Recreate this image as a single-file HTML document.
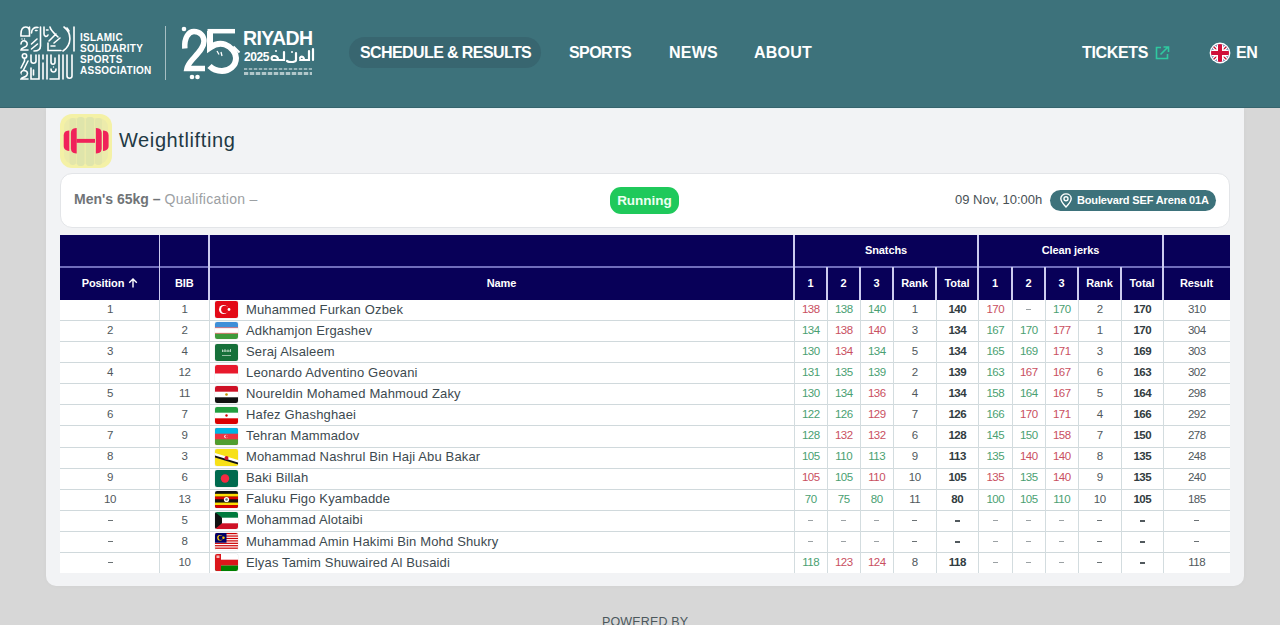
<!DOCTYPE html>
<html><head><meta charset="utf-8"><title>Weightlifting results</title>
<style>
*{box-sizing:border-box;margin:0;padding:0}
html,body{width:1280px;height:625px;overflow:hidden;background:#d7d7d7;font-family:"Liberation Sans",sans-serif}
.abs{position:absolute}
#hdr{position:absolute;left:0;top:0;width:1280px;height:108px;background:#3d727b;border-bottom:1px solid #36646d;z-index:2}
.nav{position:absolute;top:42px;height:22px;line-height:22px;color:#fff;font-weight:bold;font-size:16px;letter-spacing:-0.6px;white-space:nowrap}
.pill{position:absolute;left:349px;top:37px;width:192px;height:31px;border-radius:16px;background:#386670}
.issa{position:absolute;left:80px;top:33px;color:#fff;font-weight:bold;font-size:10px;line-height:10.85px;letter-spacing:0.25px;white-space:nowrap}
#wrap{position:absolute;left:46px;top:108px;width:1198px;height:477.5px;border-top:1px solid #e9f3f6;background:#f2f3f5;border-radius:0 0 10px 10px;box-shadow:0 0 5px rgba(0,0,0,0.03)}
.title{position:absolute;left:119px;top:128px;font-size:20px;line-height:24px;letter-spacing:0.6px;color:#1f3944;white-space:nowrap}
.card{position:absolute;left:60px;top:173px;width:1170px;height:55px;background:#fff;border:1px solid #e3e5e8;border-radius:12px}
.tbl{position:absolute;left:60px;top:235px;width:1170px}
.hc{position:absolute;background:#080058;color:#fff;font-weight:bold;font-size:11px;text-align:center;white-space:nowrap}
.c{position:absolute;height:21px;line-height:21px;text-align:center;font-size:11.5px;color:#50585c;white-space:nowrap;letter-spacing:-0.5px;text-indent:0.5px}
.r{color:#c9505f}.g{color:#4a9f72}.d{color:#8a9094}.b{font-weight:bold;color:#323c41}
</style></head><body>

<div id="hdr">
 <svg class="abs" style="left:19.5px;top:26px" width="56" height="55" viewBox="0 0 56 55" fill="none" stroke="#fff" stroke-width="1.6" stroke-linecap="round">
  <path d="M1,10 C0.5,3 3,1 5.5,1 C8.5,1 9.5,3.5 9.5,6 L9.5,10 L1,10 Z M9.5,1 L9.5,10"/>
  <path d="M11.5,7 C11.5,3 14,1 18,1.5 M15.5,4.5 L17,4.5"/>
  <path d="M20.5,1 L20.5,20 C20.5,23.5 18,25 14,25"/>
  <path d="M1,18 C1,15 4,14 6,15.5 C8,17 7.5,20 5,21 C3,22 1,22 1,24 L8,24"/><circle cx="2" cy="13" r="0.7" fill="#fff" stroke="none"/><circle cx="4.5" cy="13" r="0.7" fill="#fff" stroke="none"/>
  <path d="M11.5,18 L17,13 M11.5,23 L17.5,18"/>
  <path d="M24,1 L24,8 C24,11 27,11 28,9 M26.5,4 L28,4"/>
  <path d="M30,1 C31,5 36,9 38,11 M29,15 L36,8 M34,17 L40,12"/>
  <path d="M28,17 L28,24.5 L41,24.5 M31,20 L35,20"/>
  <path d="M44,1 C52,7 52,19 43,25 M54,1 L54,25"/>
  <path d="M47,2 L49,5"/>
  <circle cx="4.5" cy="30" r="2.2"/>
  <path d="M4.5,32.2 L4.5,35 L1,42 M8,35 L3.5,44"/>
  <path d="M1,47 C1,44.5 4,44 6,45 C8,46 8,49 5.5,50.5 C4,51.5 1.5,51.5 1,53 L8,53"/><circle cx="1.5" cy="48" r="0.6" fill="#fff" stroke="none"/>
  <path d="M11,29 L11,35 C11,38 16,38 16,35 L16,29"/>
  <path d="M11,42 L11,53 L19,53 L19,29"/>
  <path d="M13.5,44 L13.5,49"/>
  <path d="M23,29 L23,33 M23,37 L23,53 M27,29 L27,53"/>
  <path d="M31,29 L31,36 C31,39 35,39 35,36 L35,32"/>
  <path d="M31,43 C31,47 36,47 36,43 M30,53 L39,53 L39,29"/><circle cx="33.5" cy="41" r="0.7" fill="#fff" stroke="none"/>
  <path d="M43,29 L43,53 M47,29 L47,50 C47,53 52,53 52,50 L52,29"/>
 </svg>
 <div class="issa">ISLAMIC<br>SOLIDARITY<br>SPORTS<br>ASSOCIATION</div>
 <div class="abs" style="left:165px;top:26px;width:1px;height:54px;background:rgba(255,255,255,0.55)"></div>
 <svg class="abs" style="left:180px;top:25px" width="62" height="56" viewBox="0 0 62 56" fill="none" stroke="#fff" stroke-linecap="butt">
  <circle cx="4" cy="4" r="2.3" fill="#fff" stroke="none"/>
  <path d="M4.8,23.5 C4,12 9,6.5 14,6.5 C20,6.5 24,11 24,16 C24,22 19,27 12,35 C9,38.5 7.5,41 7,43.5 L25,43.5" stroke-width="5.5"/>
  <circle cx="12" cy="52" r="2.3" fill="#fff" stroke="none"/><circle cx="17.5" cy="52" r="2.3" fill="#fff" stroke="none"/>
  <path d="M27.5,6.2 L55,6.2" stroke-width="4.5"/>
  <path d="M30,6 L30,22.5 C35,19 41,18 45,19.5 C52,22 56,28 56,33 C56,41 49,46 42,46 C37,46 32.5,44 29.5,41" stroke-width="6"/>
  <path d="M53.5,21.5 L59.5,27.5" stroke-width="2"/>
  <path d="M37,26 L39,29.5 M41,27 L42,31" stroke="#fff" stroke-width="1.3"/>
 </svg>
 <div class="abs" style="left:243px;top:27px;color:#fff;font-weight:bold;font-size:19.5px;line-height:22px;letter-spacing:-0.6px;white-space:nowrap">RIYADH</div>
 <div class="abs" style="left:244px;top:49.5px;color:#fff;font-weight:bold;font-size:12px;line-height:14px;letter-spacing:-0.4px;white-space:nowrap">2025</div>
 <svg class="abs" style="left:270px;top:47px" width="46" height="16" viewBox="0 0 46 16" fill="none" stroke="#fff" stroke-width="2.2" stroke-linecap="round">
  <path d="M43,2 L43,13 M39,4 L39,13 L30,13 M34,13 C34,9 31,9 30,11 M26,6 L26,13 C26,15 20,16 17,14 M14,5 L14,13 L3,13 C1,13 1,9 4,9 C7,9 8,11 8,13"/>
  <circle cx="22" cy="5" r="1" fill="#fff" stroke="none"/><circle cx="6" cy="4" r="1" fill="#fff" stroke="none"/>
 </svg>
 <div class="abs" style="left:244px;top:67.5px;width:68px;height:2px;background:repeating-linear-gradient(90deg,rgba(255,255,255,.45) 0 3px,rgba(255,255,255,.1) 3px 5px)"></div>
 <div class="abs" style="left:244px;top:72px;width:68px;height:2.5px;background:repeating-linear-gradient(90deg,rgba(255,255,255,.6) 0 4px,rgba(255,255,255,.15) 4px 6px)"></div>
 <div class="pill"></div>
 <div class="nav" style="left:360px">SCHEDULE &amp; RESULTS</div>
 <div class="nav" style="left:569px">SPORTS</div>
 <div class="nav" style="left:669px;letter-spacing:0.2px">NEWS</div>
 <div class="nav" style="left:754px;letter-spacing:0.2px">ABOUT</div>
 <div class="nav" style="left:1082px;letter-spacing:-0.35px">TICKETS</div>
 <svg class="abs" style="left:1155px;top:46px" width="15" height="14" viewBox="0 0 15 14" fill="none" stroke="#2fc9a0" stroke-width="1.6">
  <path d="M6,1.5 L1.5,1.5 L1.5,12.5 L12.5,12.5 L12.5,8"/><path d="M5.5,8.5 L13,1 M8.5,1 L13.5,1 L13.5,6"/>
 </svg>
 <svg class="abs" style="left:1209px;top:42px" width="22" height="22" viewBox="0 0 22 22">
  <defs><clipPath id="fc"><circle cx="11" cy="11" r="9"/></clipPath></defs>
  <circle cx="11" cy="11" r="10.4" fill="#fff"/>
  <g clip-path="url(#fc)">
   <rect x="0" y="0" width="22" height="22" fill="#1a2f7a"/>
   <path d="M0,0 L22,22 M22,0 L0,22" stroke="#fff" stroke-width="4"/>
   <path d="M0,0 L22,22 M22,0 L0,22" stroke="#c8102e" stroke-width="1.3"/>
   <rect x="7.5" y="0" width="7" height="22" fill="#fff"/><rect x="0" y="7.5" width="22" height="7" fill="#fff"/>
   <rect x="9" y="0" width="4" height="22" fill="#d0103a"/><rect x="0" y="9" width="22" height="4" fill="#d0103a"/>
  </g>
 </svg>
 <div class="nav" style="left:1236px;letter-spacing:-0.4px">EN</div>
</div>

<div id="wrap"></div>
<svg class="abs" style="left:60px;top:113.5px" width="52" height="54" viewBox="0 0 52 54">
 <defs><clipPath id="ic"><rect width="52" height="54" rx="12"/></clipPath></defs>
 <g clip-path="url(#ic)">
  <rect width="52" height="54" fill="#f4f1a6"/>
  <rect x="4" y="4" width="44" height="46" rx="9" fill="#ecebab"/>
  <rect x="9.5" y="4" width="6.5" height="47" rx="3" fill="#e3e6aa"/><rect x="17" y="3" width="7.5" height="49" rx="3" fill="#dfe5ab"/>
  <rect x="26" y="3" width="8" height="49" rx="3" fill="#dfe5ab"/><rect x="35" y="4" width="7" height="47" rx="3" fill="#e3e6aa"/>
 </g>
 <path d="M9.3,16.5 L7.5,16.8 Q3.7,17.6 3.7,21.5 L3.7,32 Q3.7,35.9 7.5,36.7 L9.3,37 Z" fill="#f0225a"/>
 <path d="M16.7,13.9 L14.8,14.2 Q10.9,14.9 10.9,19 L10.9,34.4 Q10.9,38.5 14.8,39.2 L16.7,39.5 Z" fill="#f0225a"/>
 <rect x="16.5" y="24.9" width="18.5" height="3.9" fill="#f0225a"/>
 <path d="M35.9,13.9 L37.8,14.2 Q41.7,14.9 41.7,19 L41.7,34.4 Q41.7,38.5 37.8,39.2 L35.9,39.5 Z" fill="#f0225a"/>
 <path d="M43,16.5 L44.8,16.8 Q48.6,17.6 48.6,21.5 L48.6,32 Q48.6,35.9 44.8,36.7 L43,37 Z" fill="#f0225a"/>
</svg>
<div class="title">Weightlifting</div>
<div class="card"></div>
<div class="abs" style="left:74px;top:189.5px;font-size:14px;line-height:18px;white-space:nowrap"><span style="font-weight:bold;color:#707477">Men&#39;s 65kg –</span> <span style="color:#9ca0a3;letter-spacing:0.3px">Qualification –</span></div>
<div class="abs" style="left:610px;top:187px;width:69px;height:27px;border-radius:11px;background:#1fc95b;color:#ecfff1;font-weight:bold;font-size:13.5px;line-height:27px;text-align:center;white-space:nowrap">Running</div>
<div class="abs" style="left:955px;top:191px;font-size:13px;line-height:18px;color:#485155;white-space:nowrap">09 Nov, 10:00h</div>
<div class="abs" style="left:1050px;top:190px;width:166px;height:21px;border-radius:11px;background:#3d727b"></div>
<svg class="abs" style="left:1059px;top:193px" width="14" height="15" viewBox="0 0 14 15" fill="none" stroke="#fff" stroke-width="1.4"><path d="M7,14 C3,10 1.8,7.5 1.8,5.6 C1.8,2.8 4.2,0.9 7,0.9 C9.8,0.9 12.2,2.8 12.2,5.6 C12.2,7.5 11,10 7,14 Z"/><circle cx="7" cy="5.7" r="2"/></svg>
<div class="abs" style="left:1077px;top:192px;font-size:11px;line-height:17px;font-weight:bold;color:#fff;letter-spacing:-0.15px;white-space:nowrap">Boulevard SEF Arena 01A</div>
<div class="abs" style="left:60px;top:235px;width:1170px;height:64.80000000000001px;background:#080058"></div>
<div class="abs" style="left:60px;top:266px;width:1170px;height:2px;background:#6f6cba"></div>
<div class="abs" style="left:158.75px;top:235px;width:1.5px;height:64.80000000000001px;background:#cccbef"></div>
<div class="abs" style="left:208.25px;top:235px;width:1.5px;height:64.80000000000001px;background:#cccbef"></div>
<div class="abs" style="left:793.25px;top:235px;width:1.5px;height:64.80000000000001px;background:#cccbef"></div>
<div class="abs" style="left:826.25px;top:267px;width:1.5px;height:32.80000000000001px;background:#cccbef"></div>
<div class="abs" style="left:859.25px;top:267px;width:1.5px;height:32.80000000000001px;background:#cccbef"></div>
<div class="abs" style="left:892.25px;top:267px;width:1.5px;height:32.80000000000001px;background:#cccbef"></div>
<div class="abs" style="left:935.25px;top:267px;width:1.5px;height:32.80000000000001px;background:#cccbef"></div>
<div class="abs" style="left:977.25px;top:235px;width:1.5px;height:64.80000000000001px;background:#cccbef"></div>
<div class="abs" style="left:1011.25px;top:267px;width:1.5px;height:32.80000000000001px;background:#cccbef"></div>
<div class="abs" style="left:1044.25px;top:267px;width:1.5px;height:32.80000000000001px;background:#cccbef"></div>
<div class="abs" style="left:1077.25px;top:267px;width:1.5px;height:32.80000000000001px;background:#cccbef"></div>
<div class="abs" style="left:1120.25px;top:267px;width:1.5px;height:32.80000000000001px;background:#cccbef"></div>
<div class="abs" style="left:1162.25px;top:235px;width:1.5px;height:64.80000000000001px;background:#cccbef"></div>
<div class="abs" style="left:794px;top:234px;width:184px;height:32px;line-height:32px;text-align:center;color:#fff;font-weight:bold;font-size:11px;white-space:nowrap;letter-spacing:-0.1px">Snatchs</div>
<div class="abs" style="left:978px;top:234px;width:185px;height:32px;line-height:32px;text-align:center;color:#fff;font-weight:bold;font-size:11px;white-space:nowrap;letter-spacing:-0.1px">Clean jerks</div>
<div class="abs" style="left:60px;top:267.8px;width:99.5px;height:31.80000000000001px;line-height:31.80000000000001px;text-align:center;color:#fff;font-weight:bold;font-size:11px;white-space:nowrap;letter-spacing:-0.1px">Position <svg width="10" height="10" viewBox="0 0 10 10" style="vertical-align:-1px;margin-left:0.5px" fill="none" stroke="#fff" stroke-width="1.4"><path d="M5,9.5 L5,1 M1.2,4.8 L5,1 L8.8,4.8"/></svg></div>
<div class="abs" style="left:159.5px;top:267.8px;width:49.5px;height:31.80000000000001px;line-height:31.80000000000001px;text-align:center;color:#fff;font-weight:bold;font-size:11px;white-space:nowrap;letter-spacing:-0.1px">BIB</div>
<div class="abs" style="left:209px;top:267.8px;width:585px;height:31.80000000000001px;line-height:31.80000000000001px;text-align:center;color:#fff;font-weight:bold;font-size:11px;white-space:nowrap;letter-spacing:-0.1px">Name</div>
<div class="abs" style="left:794px;top:267.8px;width:33px;height:31.80000000000001px;line-height:31.80000000000001px;text-align:center;color:#fff;font-weight:bold;font-size:11px;white-space:nowrap;letter-spacing:-0.1px">1</div>
<div class="abs" style="left:827px;top:267.8px;width:33px;height:31.80000000000001px;line-height:31.80000000000001px;text-align:center;color:#fff;font-weight:bold;font-size:11px;white-space:nowrap;letter-spacing:-0.1px">2</div>
<div class="abs" style="left:860px;top:267.8px;width:33px;height:31.80000000000001px;line-height:31.80000000000001px;text-align:center;color:#fff;font-weight:bold;font-size:11px;white-space:nowrap;letter-spacing:-0.1px">3</div>
<div class="abs" style="left:893px;top:267.8px;width:43px;height:31.80000000000001px;line-height:31.80000000000001px;text-align:center;color:#fff;font-weight:bold;font-size:11px;white-space:nowrap;letter-spacing:-0.1px">Rank</div>
<div class="abs" style="left:936px;top:267.8px;width:42px;height:31.80000000000001px;line-height:31.80000000000001px;text-align:center;color:#fff;font-weight:bold;font-size:11px;white-space:nowrap;letter-spacing:-0.1px">Total</div>
<div class="abs" style="left:978px;top:267.8px;width:34px;height:31.80000000000001px;line-height:31.80000000000001px;text-align:center;color:#fff;font-weight:bold;font-size:11px;white-space:nowrap;letter-spacing:-0.1px">1</div>
<div class="abs" style="left:1012px;top:267.8px;width:33px;height:31.80000000000001px;line-height:31.80000000000001px;text-align:center;color:#fff;font-weight:bold;font-size:11px;white-space:nowrap;letter-spacing:-0.1px">2</div>
<div class="abs" style="left:1045px;top:267.8px;width:33px;height:31.80000000000001px;line-height:31.80000000000001px;text-align:center;color:#fff;font-weight:bold;font-size:11px;white-space:nowrap;letter-spacing:-0.1px">3</div>
<div class="abs" style="left:1078px;top:267.8px;width:43px;height:31.80000000000001px;line-height:31.80000000000001px;text-align:center;color:#fff;font-weight:bold;font-size:11px;white-space:nowrap;letter-spacing:-0.1px">Rank</div>
<div class="abs" style="left:1121px;top:267.8px;width:42px;height:31.80000000000001px;line-height:31.80000000000001px;text-align:center;color:#fff;font-weight:bold;font-size:11px;white-space:nowrap;letter-spacing:-0.1px">Total</div>
<div class="abs" style="left:1163px;top:267.8px;width:67px;height:31.80000000000001px;line-height:31.80000000000001px;text-align:center;color:#fff;font-weight:bold;font-size:11px;white-space:nowrap;letter-spacing:-0.1px">Result</div>
<div class="abs" style="left:60px;top:299.8px;width:1170px;height:273.5px;background:#fff"></div>
<div class="abs" style="left:60px;top:320px;width:1170px;height:1px;background:#d0d9dc"></div>
<div class="abs" style="left:60px;top:341px;width:1170px;height:1px;background:#d0d9dc"></div>
<div class="abs" style="left:60px;top:362px;width:1170px;height:1px;background:#d0d9dc"></div>
<div class="abs" style="left:60px;top:383px;width:1170px;height:1px;background:#d0d9dc"></div>
<div class="abs" style="left:60px;top:404px;width:1170px;height:1px;background:#d0d9dc"></div>
<div class="abs" style="left:60px;top:425px;width:1170px;height:1px;background:#d0d9dc"></div>
<div class="abs" style="left:60px;top:447px;width:1170px;height:1px;background:#d0d9dc"></div>
<div class="abs" style="left:60px;top:468px;width:1170px;height:1px;background:#d0d9dc"></div>
<div class="abs" style="left:60px;top:489px;width:1170px;height:1px;background:#d0d9dc"></div>
<div class="abs" style="left:60px;top:510px;width:1170px;height:1px;background:#d0d9dc"></div>
<div class="abs" style="left:60px;top:531px;width:1170px;height:1px;background:#d0d9dc"></div>
<div class="abs" style="left:60px;top:552px;width:1170px;height:1px;background:#d0d9dc"></div>
<div class="abs" style="left:159px;top:299.8px;width:1px;height:273.5px;background:#d3dcdf"></div>
<div class="abs" style="left:209px;top:299.8px;width:1px;height:273.5px;background:#d3dcdf"></div>
<div class="abs" style="left:794px;top:299.8px;width:1px;height:273.5px;background:#d3dcdf"></div>
<div class="abs" style="left:827px;top:299.8px;width:1px;height:273.5px;background:#d3dcdf"></div>
<div class="abs" style="left:860px;top:299.8px;width:1px;height:273.5px;background:#d3dcdf"></div>
<div class="abs" style="left:893px;top:299.8px;width:1px;height:273.5px;background:#d3dcdf"></div>
<div class="abs" style="left:936px;top:299.8px;width:1px;height:273.5px;background:#d3dcdf"></div>
<div class="abs" style="left:978px;top:299.8px;width:1px;height:273.5px;background:#d3dcdf"></div>
<div class="abs" style="left:1012px;top:299.8px;width:1px;height:273.5px;background:#d3dcdf"></div>
<div class="abs" style="left:1045px;top:299.8px;width:1px;height:273.5px;background:#d3dcdf"></div>
<div class="abs" style="left:1078px;top:299.8px;width:1px;height:273.5px;background:#d3dcdf"></div>
<div class="abs" style="left:1121px;top:299.8px;width:1px;height:273.5px;background:#d3dcdf"></div>
<div class="abs" style="left:1163px;top:299.8px;width:1px;height:273.5px;background:#d3dcdf"></div>
<div class="c " style="left:60px;top:298.7px;width:99.5px">1</div>
<div class="c " style="left:159.5px;top:298.7px;width:49.5px">1</div>
<div class="abs" style="left:215px;top:301.3px;width:23px;height:17px;border-radius:2px;overflow:hidden;box-shadow:0 0 1px rgba(0,0,0,.35)"><svg width="23" height="17" viewBox="0 0 23 17"><rect width="23" height="17" fill="#e30a17"/><circle cx="8.6" cy="8.5" r="4.6" fill="#fff"/><circle cx="9.8" cy="8.5" r="3.7" fill="#e30a17"/><circle cx="14" cy="8.5" r="1.4" fill="#fff"/></svg></div>
<div class="abs" style="left:246px;top:298.6px;height:21px;line-height:21px;font-size:13px;color:#3d4a50;letter-spacing:0.15px;white-space:nowrap">Muhammed Furkan Ozbek</div>
<div class="c r" style="left:794px;top:298.7px;width:33px">138</div>
<div class="c g" style="left:827px;top:298.7px;width:33px">138</div>
<div class="c g" style="left:860px;top:298.7px;width:33px">140</div>
<div class="c " style="left:893px;top:298.7px;width:43px">1</div>
<div class="c b" style="left:936px;top:298.7px;width:42px">140</div>
<div class="c r" style="left:978px;top:298.7px;width:34px">170</div>
<div class="c d" style="left:1012px;top:298.7px;width:33px"><span style="display:inline-block;width:5px;height:1.3px;background:currentColor;vertical-align:middle;opacity:.85"></span></div>
<div class="c g" style="left:1045px;top:298.7px;width:33px">170</div>
<div class="c " style="left:1078px;top:298.7px;width:43px">2</div>
<div class="c b" style="left:1121px;top:298.7px;width:42px">170</div>
<div class="c " style="left:1163px;top:298.7px;width:67px">310</div>
<div class="c " style="left:60px;top:319.8px;width:99.5px">2</div>
<div class="c " style="left:159.5px;top:319.8px;width:49.5px">2</div>
<div class="abs" style="left:215px;top:322.4px;width:23px;height:17px;border-radius:2px;overflow:hidden;box-shadow:0 0 1px rgba(0,0,0,.35)"><svg width="23" height="17" viewBox="0 0 23 17"><rect width="23" height="17" fill="#fff"/><rect width="23" height="5.5" fill="#3f8fd8"/><rect y="11.5" width="23" height="5.5" fill="#3e9a3a"/><rect y="5.5" width="23" height="0.6" fill="#d33"/><rect y="10.9" width="23" height="0.6" fill="#d33"/></svg></div>
<div class="abs" style="left:246px;top:319.6px;height:21px;line-height:21px;font-size:13px;color:#3d4a50;letter-spacing:0.15px;white-space:nowrap">Adkhamjon Ergashev</div>
<div class="c g" style="left:794px;top:319.8px;width:33px">134</div>
<div class="c r" style="left:827px;top:319.8px;width:33px">138</div>
<div class="c r" style="left:860px;top:319.8px;width:33px">140</div>
<div class="c " style="left:893px;top:319.8px;width:43px">3</div>
<div class="c b" style="left:936px;top:319.8px;width:42px">134</div>
<div class="c g" style="left:978px;top:319.8px;width:34px">167</div>
<div class="c g" style="left:1012px;top:319.8px;width:33px">170</div>
<div class="c r" style="left:1045px;top:319.8px;width:33px">177</div>
<div class="c " style="left:1078px;top:319.8px;width:43px">1</div>
<div class="c b" style="left:1121px;top:319.8px;width:42px">170</div>
<div class="c " style="left:1163px;top:319.8px;width:67px">304</div>
<div class="c " style="left:60px;top:340.9px;width:99.5px">3</div>
<div class="c " style="left:159.5px;top:340.9px;width:49.5px">4</div>
<div class="abs" style="left:215px;top:343.5px;width:23px;height:17px;border-radius:2px;overflow:hidden;box-shadow:0 0 1px rgba(0,0,0,.35)"><svg width="23" height="17" viewBox="0 0 23 17"><rect width="23" height="17" fill="#16703a"/><path d="M7,7 L16,7 M7.5,5.5 L7.5,8 M10,5 L10,8 M13,5.5 L13,8 M15.5,5 L15.5,8" stroke="#cfe3d4" stroke-width="0.8"/><rect x="7" y="11" width="9" height="0.7" fill="#cfe3d4"/></svg></div>
<div class="abs" style="left:246px;top:340.7px;height:21px;line-height:21px;font-size:13px;color:#3d4a50;letter-spacing:0.15px;white-space:nowrap">Seraj Alsaleem</div>
<div class="c g" style="left:794px;top:340.9px;width:33px">130</div>
<div class="c r" style="left:827px;top:340.9px;width:33px">134</div>
<div class="c g" style="left:860px;top:340.9px;width:33px">134</div>
<div class="c " style="left:893px;top:340.9px;width:43px">5</div>
<div class="c b" style="left:936px;top:340.9px;width:42px">134</div>
<div class="c g" style="left:978px;top:340.9px;width:34px">165</div>
<div class="c g" style="left:1012px;top:340.9px;width:33px">169</div>
<div class="c r" style="left:1045px;top:340.9px;width:33px">171</div>
<div class="c " style="left:1078px;top:340.9px;width:43px">3</div>
<div class="c b" style="left:1121px;top:340.9px;width:42px">169</div>
<div class="c " style="left:1163px;top:340.9px;width:67px">303</div>
<div class="c " style="left:60px;top:362.0px;width:99.5px">4</div>
<div class="c " style="left:159.5px;top:362.0px;width:49.5px">12</div>
<div class="abs" style="left:215px;top:364.6px;width:23px;height:17px;border-radius:2px;overflow:hidden;box-shadow:0 0 1px rgba(0,0,0,.35)"><svg width="23" height="17" viewBox="0 0 23 17"><rect width="23" height="17" fill="#fff"/><rect width="23" height="8.5" fill="#e8192c"/></svg></div>
<div class="abs" style="left:246px;top:361.8px;height:21px;line-height:21px;font-size:13px;color:#3d4a50;letter-spacing:0.15px;white-space:nowrap">Leonardo Adventino Geovani</div>
<div class="c g" style="left:794px;top:362.0px;width:33px">131</div>
<div class="c g" style="left:827px;top:362.0px;width:33px">135</div>
<div class="c g" style="left:860px;top:362.0px;width:33px">139</div>
<div class="c " style="left:893px;top:362.0px;width:43px">2</div>
<div class="c b" style="left:936px;top:362.0px;width:42px">139</div>
<div class="c g" style="left:978px;top:362.0px;width:34px">163</div>
<div class="c r" style="left:1012px;top:362.0px;width:33px">167</div>
<div class="c r" style="left:1045px;top:362.0px;width:33px">167</div>
<div class="c " style="left:1078px;top:362.0px;width:43px">6</div>
<div class="c b" style="left:1121px;top:362.0px;width:42px">163</div>
<div class="c " style="left:1163px;top:362.0px;width:67px">302</div>
<div class="c " style="left:60px;top:383.1px;width:99.5px">5</div>
<div class="c " style="left:159.5px;top:383.1px;width:49.5px">11</div>
<div class="abs" style="left:215px;top:385.7px;width:23px;height:17px;border-radius:2px;overflow:hidden;box-shadow:0 0 1px rgba(0,0,0,.35)"><svg width="23" height="17" viewBox="0 0 23 17"><rect width="23" height="17" fill="#fff"/><rect width="23" height="5.7" fill="#ce1126"/><rect y="11.3" width="23" height="5.7" fill="#111"/><circle cx="11.5" cy="8.5" r="1.3" fill="#c09300"/></svg></div>
<div class="abs" style="left:246px;top:382.9px;height:21px;line-height:21px;font-size:13px;color:#3d4a50;letter-spacing:0.15px;white-space:nowrap">Noureldin Mohamed Mahmoud Zaky</div>
<div class="c g" style="left:794px;top:383.1px;width:33px">130</div>
<div class="c g" style="left:827px;top:383.1px;width:33px">134</div>
<div class="c r" style="left:860px;top:383.1px;width:33px">136</div>
<div class="c " style="left:893px;top:383.1px;width:43px">4</div>
<div class="c b" style="left:936px;top:383.1px;width:42px">134</div>
<div class="c g" style="left:978px;top:383.1px;width:34px">158</div>
<div class="c g" style="left:1012px;top:383.1px;width:33px">164</div>
<div class="c r" style="left:1045px;top:383.1px;width:33px">167</div>
<div class="c " style="left:1078px;top:383.1px;width:43px">5</div>
<div class="c b" style="left:1121px;top:383.1px;width:42px">164</div>
<div class="c " style="left:1163px;top:383.1px;width:67px">298</div>
<div class="c " style="left:60px;top:404.2px;width:99.5px">6</div>
<div class="c " style="left:159.5px;top:404.2px;width:49.5px">7</div>
<div class="abs" style="left:215px;top:406.8px;width:23px;height:17px;border-radius:2px;overflow:hidden;box-shadow:0 0 1px rgba(0,0,0,.35)"><svg width="23" height="17" viewBox="0 0 23 17"><rect width="23" height="17" fill="#fff"/><rect width="23" height="5.7" fill="#239f40"/><rect y="11.3" width="23" height="5.7" fill="#da0000"/><circle cx="11.5" cy="8.5" r="1.2" fill="#da0000"/></svg></div>
<div class="abs" style="left:246px;top:404.0px;height:21px;line-height:21px;font-size:13px;color:#3d4a50;letter-spacing:0.15px;white-space:nowrap">Hafez Ghashghaei</div>
<div class="c g" style="left:794px;top:404.2px;width:33px">122</div>
<div class="c g" style="left:827px;top:404.2px;width:33px">126</div>
<div class="c r" style="left:860px;top:404.2px;width:33px">129</div>
<div class="c " style="left:893px;top:404.2px;width:43px">7</div>
<div class="c b" style="left:936px;top:404.2px;width:42px">126</div>
<div class="c g" style="left:978px;top:404.2px;width:34px">166</div>
<div class="c r" style="left:1012px;top:404.2px;width:33px">170</div>
<div class="c r" style="left:1045px;top:404.2px;width:33px">171</div>
<div class="c " style="left:1078px;top:404.2px;width:43px">4</div>
<div class="c b" style="left:1121px;top:404.2px;width:42px">166</div>
<div class="c " style="left:1163px;top:404.2px;width:67px">292</div>
<div class="c " style="left:60px;top:425.2px;width:99.5px">7</div>
<div class="c " style="left:159.5px;top:425.2px;width:49.5px">9</div>
<div class="abs" style="left:215px;top:427.8px;width:23px;height:17px;border-radius:2px;overflow:hidden;box-shadow:0 0 1px rgba(0,0,0,.35)"><svg width="23" height="17" viewBox="0 0 23 17"><rect width="23" height="17" fill="#ef3340"/><rect width="23" height="5.7" fill="#00b5e2"/><rect y="11.3" width="23" height="5.7" fill="#509e2f"/><circle cx="11" cy="8.5" r="1.8" fill="#fff"/><circle cx="11.6" cy="8.5" r="1.4" fill="#ef3340"/></svg></div>
<div class="abs" style="left:246px;top:425.1px;height:21px;line-height:21px;font-size:13px;color:#3d4a50;letter-spacing:0.15px;white-space:nowrap">Tehran Mammadov</div>
<div class="c g" style="left:794px;top:425.2px;width:33px">128</div>
<div class="c r" style="left:827px;top:425.2px;width:33px">132</div>
<div class="c r" style="left:860px;top:425.2px;width:33px">132</div>
<div class="c " style="left:893px;top:425.2px;width:43px">6</div>
<div class="c b" style="left:936px;top:425.2px;width:42px">128</div>
<div class="c g" style="left:978px;top:425.2px;width:34px">145</div>
<div class="c g" style="left:1012px;top:425.2px;width:33px">150</div>
<div class="c r" style="left:1045px;top:425.2px;width:33px">158</div>
<div class="c " style="left:1078px;top:425.2px;width:43px">7</div>
<div class="c b" style="left:1121px;top:425.2px;width:42px">150</div>
<div class="c " style="left:1163px;top:425.2px;width:67px">278</div>
<div class="c " style="left:60px;top:446.3px;width:99.5px">8</div>
<div class="c " style="left:159.5px;top:446.3px;width:49.5px">3</div>
<div class="abs" style="left:215px;top:448.9px;width:23px;height:17px;border-radius:2px;overflow:hidden;box-shadow:0 0 1px rgba(0,0,0,.35)"><svg width="23" height="17" viewBox="0 0 23 17"><rect width="23" height="17" fill="#f7e017"/><path d="M0,4 L23,11 L23,15 L0,8 Z" fill="#fff"/><path d="M0,6.5 L23,13.5 L23,15.5 L0,8.5 Z" fill="#111"/><circle cx="11.5" cy="9" r="2" fill="#cf1126"/></svg></div>
<div class="abs" style="left:246px;top:446.2px;height:21px;line-height:21px;font-size:13px;color:#3d4a50;letter-spacing:0.15px;white-space:nowrap">Mohammad Nashrul Bin Haji Abu Bakar</div>
<div class="c g" style="left:794px;top:446.3px;width:33px">105</div>
<div class="c g" style="left:827px;top:446.3px;width:33px">110</div>
<div class="c g" style="left:860px;top:446.3px;width:33px">113</div>
<div class="c " style="left:893px;top:446.3px;width:43px">9</div>
<div class="c b" style="left:936px;top:446.3px;width:42px">113</div>
<div class="c g" style="left:978px;top:446.3px;width:34px">135</div>
<div class="c r" style="left:1012px;top:446.3px;width:33px">140</div>
<div class="c r" style="left:1045px;top:446.3px;width:33px">140</div>
<div class="c " style="left:1078px;top:446.3px;width:43px">8</div>
<div class="c b" style="left:1121px;top:446.3px;width:42px">135</div>
<div class="c " style="left:1163px;top:446.3px;width:67px">248</div>
<div class="c " style="left:60px;top:467.4px;width:99.5px">9</div>
<div class="c " style="left:159.5px;top:467.4px;width:49.5px">6</div>
<div class="abs" style="left:215px;top:470.0px;width:23px;height:17px;border-radius:2px;overflow:hidden;box-shadow:0 0 1px rgba(0,0,0,.35)"><svg width="23" height="17" viewBox="0 0 23 17"><rect width="23" height="17" fill="#006a4e"/><circle cx="10" cy="8.5" r="4.2" fill="#f42a41"/></svg></div>
<div class="abs" style="left:246px;top:467.3px;height:21px;line-height:21px;font-size:13px;color:#3d4a50;letter-spacing:0.15px;white-space:nowrap">Baki Billah</div>
<div class="c r" style="left:794px;top:467.4px;width:33px">105</div>
<div class="c g" style="left:827px;top:467.4px;width:33px">105</div>
<div class="c r" style="left:860px;top:467.4px;width:33px">110</div>
<div class="c " style="left:893px;top:467.4px;width:43px">10</div>
<div class="c b" style="left:936px;top:467.4px;width:42px">105</div>
<div class="c r" style="left:978px;top:467.4px;width:34px">135</div>
<div class="c g" style="left:1012px;top:467.4px;width:33px">135</div>
<div class="c r" style="left:1045px;top:467.4px;width:33px">140</div>
<div class="c " style="left:1078px;top:467.4px;width:43px">9</div>
<div class="c b" style="left:1121px;top:467.4px;width:42px">135</div>
<div class="c " style="left:1163px;top:467.4px;width:67px">240</div>
<div class="c " style="left:60px;top:488.5px;width:99.5px">10</div>
<div class="c " style="left:159.5px;top:488.5px;width:49.5px">13</div>
<div class="abs" style="left:215px;top:491.1px;width:23px;height:17px;border-radius:2px;overflow:hidden;box-shadow:0 0 1px rgba(0,0,0,.35)"><svg width="23" height="17" viewBox="0 0 23 17"><rect width="23" height="17" fill="#111"/><rect y="2.83" width="23" height="2.83" fill="#fcdc04"/><rect y="5.66" width="23" height="2.83" fill="#d90000"/><rect y="11.33" width="23" height="2.83" fill="#fcdc04"/><rect y="14.16" width="23" height="2.84" fill="#d90000"/><rect y="8.5" width="23" height="2.83" fill="#111"/><circle cx="11.5" cy="8.5" r="2.6" fill="#fff"/><circle cx="11.5" cy="8.5" r="1.2" fill="#777"/></svg></div>
<div class="abs" style="left:246px;top:488.4px;height:21px;line-height:21px;font-size:13px;color:#3d4a50;letter-spacing:0.15px;white-space:nowrap">Faluku Figo Kyambadde</div>
<div class="c g" style="left:794px;top:488.5px;width:33px">70</div>
<div class="c g" style="left:827px;top:488.5px;width:33px">75</div>
<div class="c g" style="left:860px;top:488.5px;width:33px">80</div>
<div class="c " style="left:893px;top:488.5px;width:43px">11</div>
<div class="c b" style="left:936px;top:488.5px;width:42px">80</div>
<div class="c g" style="left:978px;top:488.5px;width:34px">100</div>
<div class="c g" style="left:1012px;top:488.5px;width:33px">105</div>
<div class="c g" style="left:1045px;top:488.5px;width:33px">110</div>
<div class="c " style="left:1078px;top:488.5px;width:43px">10</div>
<div class="c b" style="left:1121px;top:488.5px;width:42px">105</div>
<div class="c " style="left:1163px;top:488.5px;width:67px">185</div>
<div class="c " style="left:60px;top:509.6px;width:99.5px"><span style="display:inline-block;width:5px;height:1.3px;background:currentColor;vertical-align:middle;opacity:.85"></span></div>
<div class="c " style="left:159.5px;top:509.6px;width:49.5px">5</div>
<div class="abs" style="left:215px;top:512.2px;width:23px;height:17px;border-radius:2px;overflow:hidden;box-shadow:0 0 1px rgba(0,0,0,.35)"><svg width="23" height="17" viewBox="0 0 23 17"><rect width="23" height="17" fill="#fff"/><rect width="23" height="5.7" fill="#007a3d"/><rect y="11.3" width="23" height="5.7" fill="#ce1126"/><path d="M0,0 L7,5.7 L7,11.3 L0,17 Z" fill="#111"/></svg></div>
<div class="abs" style="left:246px;top:509.4px;height:21px;line-height:21px;font-size:13px;color:#3d4a50;letter-spacing:0.15px;white-space:nowrap">Mohammad Alotaibi</div>
<div class="c d" style="left:794px;top:509.6px;width:33px"><span style="display:inline-block;width:5px;height:1.3px;background:currentColor;vertical-align:middle;opacity:.85"></span></div>
<div class="c d" style="left:827px;top:509.6px;width:33px"><span style="display:inline-block;width:5px;height:1.3px;background:currentColor;vertical-align:middle;opacity:.85"></span></div>
<div class="c d" style="left:860px;top:509.6px;width:33px"><span style="display:inline-block;width:5px;height:1.3px;background:currentColor;vertical-align:middle;opacity:.85"></span></div>
<div class="c " style="left:893px;top:509.6px;width:43px"><span style="display:inline-block;width:5px;height:1.3px;background:currentColor;vertical-align:middle;opacity:.85"></span></div>
<div class="c b" style="left:936px;top:509.6px;width:42px"><span style="display:inline-block;width:5px;height:2px;background:currentColor;vertical-align:middle;opacity:.85"></span></div>
<div class="c d" style="left:978px;top:509.6px;width:34px"><span style="display:inline-block;width:5px;height:1.3px;background:currentColor;vertical-align:middle;opacity:.85"></span></div>
<div class="c d" style="left:1012px;top:509.6px;width:33px"><span style="display:inline-block;width:5px;height:1.3px;background:currentColor;vertical-align:middle;opacity:.85"></span></div>
<div class="c d" style="left:1045px;top:509.6px;width:33px"><span style="display:inline-block;width:5px;height:1.3px;background:currentColor;vertical-align:middle;opacity:.85"></span></div>
<div class="c " style="left:1078px;top:509.6px;width:43px"><span style="display:inline-block;width:5px;height:1.3px;background:currentColor;vertical-align:middle;opacity:.85"></span></div>
<div class="c b" style="left:1121px;top:509.6px;width:42px"><span style="display:inline-block;width:5px;height:2px;background:currentColor;vertical-align:middle;opacity:.85"></span></div>
<div class="c " style="left:1163px;top:509.6px;width:67px"><span style="display:inline-block;width:5px;height:1.3px;background:currentColor;vertical-align:middle;opacity:.85"></span></div>
<div class="c " style="left:60px;top:530.7px;width:99.5px"><span style="display:inline-block;width:5px;height:1.3px;background:currentColor;vertical-align:middle;opacity:.85"></span></div>
<div class="c " style="left:159.5px;top:530.7px;width:49.5px">8</div>
<div class="abs" style="left:215px;top:533.3px;width:23px;height:17px;border-radius:2px;overflow:hidden;box-shadow:0 0 1px rgba(0,0,0,.35)"><svg width="23" height="17" viewBox="0 0 23 17"><rect width="23" height="17" fill="#fff"/><rect y="0.00" width="23" height="1.21" fill="#cc0001"/><rect y="2.43" width="23" height="1.21" fill="#cc0001"/><rect y="4.86" width="23" height="1.21" fill="#cc0001"/><rect y="7.29" width="23" height="1.21" fill="#cc0001"/><rect y="9.71" width="23" height="1.21" fill="#cc0001"/><rect y="12.14" width="23" height="1.21" fill="#cc0001"/><rect y="14.57" width="23" height="1.21" fill="#cc0001"/><rect width="11.5" height="9.7" fill="#010066"/><circle cx="5" cy="4.8" r="2.8" fill="#fc0"/><circle cx="5.8" cy="4.8" r="2.3" fill="#010066"/><circle cx="8.5" cy="4.8" r="1.2" fill="#fc0"/></svg></div>
<div class="abs" style="left:246px;top:530.5px;height:21px;line-height:21px;font-size:13px;color:#3d4a50;letter-spacing:0.15px;white-space:nowrap">Muhammad Amin Hakimi Bin Mohd Shukry</div>
<div class="c d" style="left:794px;top:530.7px;width:33px"><span style="display:inline-block;width:5px;height:1.3px;background:currentColor;vertical-align:middle;opacity:.85"></span></div>
<div class="c d" style="left:827px;top:530.7px;width:33px"><span style="display:inline-block;width:5px;height:1.3px;background:currentColor;vertical-align:middle;opacity:.85"></span></div>
<div class="c d" style="left:860px;top:530.7px;width:33px"><span style="display:inline-block;width:5px;height:1.3px;background:currentColor;vertical-align:middle;opacity:.85"></span></div>
<div class="c " style="left:893px;top:530.7px;width:43px"><span style="display:inline-block;width:5px;height:1.3px;background:currentColor;vertical-align:middle;opacity:.85"></span></div>
<div class="c b" style="left:936px;top:530.7px;width:42px"><span style="display:inline-block;width:5px;height:2px;background:currentColor;vertical-align:middle;opacity:.85"></span></div>
<div class="c d" style="left:978px;top:530.7px;width:34px"><span style="display:inline-block;width:5px;height:1.3px;background:currentColor;vertical-align:middle;opacity:.85"></span></div>
<div class="c d" style="left:1012px;top:530.7px;width:33px"><span style="display:inline-block;width:5px;height:1.3px;background:currentColor;vertical-align:middle;opacity:.85"></span></div>
<div class="c d" style="left:1045px;top:530.7px;width:33px"><span style="display:inline-block;width:5px;height:1.3px;background:currentColor;vertical-align:middle;opacity:.85"></span></div>
<div class="c " style="left:1078px;top:530.7px;width:43px"><span style="display:inline-block;width:5px;height:1.3px;background:currentColor;vertical-align:middle;opacity:.85"></span></div>
<div class="c b" style="left:1121px;top:530.7px;width:42px"><span style="display:inline-block;width:5px;height:2px;background:currentColor;vertical-align:middle;opacity:.85"></span></div>
<div class="c " style="left:1163px;top:530.7px;width:67px"><span style="display:inline-block;width:5px;height:1.3px;background:currentColor;vertical-align:middle;opacity:.85"></span></div>
<div class="c " style="left:60px;top:551.8px;width:99.5px"><span style="display:inline-block;width:5px;height:1.3px;background:currentColor;vertical-align:middle;opacity:.85"></span></div>
<div class="c " style="left:159.5px;top:551.8px;width:49.5px">10</div>
<div class="abs" style="left:215px;top:554.4px;width:23px;height:17px;border-radius:2px;overflow:hidden;box-shadow:0 0 1px rgba(0,0,0,.35)"><svg width="23" height="17" viewBox="0 0 23 17"><rect width="23" height="17" fill="#fff"/><rect y="11.3" width="23" height="5.7" fill="#008000"/><rect x="6" y="5.7" width="17" height="5.6" fill="#db161b"/><rect width="6" height="17" fill="#db161b"/><rect x="1.5" y="1.5" width="3" height="2.5" fill="#fff" opacity=".7"/></svg></div>
<div class="abs" style="left:246px;top:551.6px;height:21px;line-height:21px;font-size:13px;color:#3d4a50;letter-spacing:0.15px;white-space:nowrap">Elyas Tamim Shuwaired Al Busaidi</div>
<div class="c g" style="left:794px;top:551.8px;width:33px">118</div>
<div class="c r" style="left:827px;top:551.8px;width:33px">123</div>
<div class="c r" style="left:860px;top:551.8px;width:33px">124</div>
<div class="c " style="left:893px;top:551.8px;width:43px">8</div>
<div class="c b" style="left:936px;top:551.8px;width:42px">118</div>
<div class="c d" style="left:978px;top:551.8px;width:34px"><span style="display:inline-block;width:5px;height:1.3px;background:currentColor;vertical-align:middle;opacity:.85"></span></div>
<div class="c d" style="left:1012px;top:551.8px;width:33px"><span style="display:inline-block;width:5px;height:1.3px;background:currentColor;vertical-align:middle;opacity:.85"></span></div>
<div class="c d" style="left:1045px;top:551.8px;width:33px"><span style="display:inline-block;width:5px;height:1.3px;background:currentColor;vertical-align:middle;opacity:.85"></span></div>
<div class="c " style="left:1078px;top:551.8px;width:43px"><span style="display:inline-block;width:5px;height:1.3px;background:currentColor;vertical-align:middle;opacity:.85"></span></div>
<div class="c b" style="left:1121px;top:551.8px;width:42px"><span style="display:inline-block;width:5px;height:2px;background:currentColor;vertical-align:middle;opacity:.85"></span></div>
<div class="c " style="left:1163px;top:551.8px;width:67px">118</div>
<div class="abs" style="left:602px;top:614px;font-size:12.5px;line-height:16px;color:#4b575c;letter-spacing:0.15px;white-space:nowrap">POWERED BY</div>
</body></html>
